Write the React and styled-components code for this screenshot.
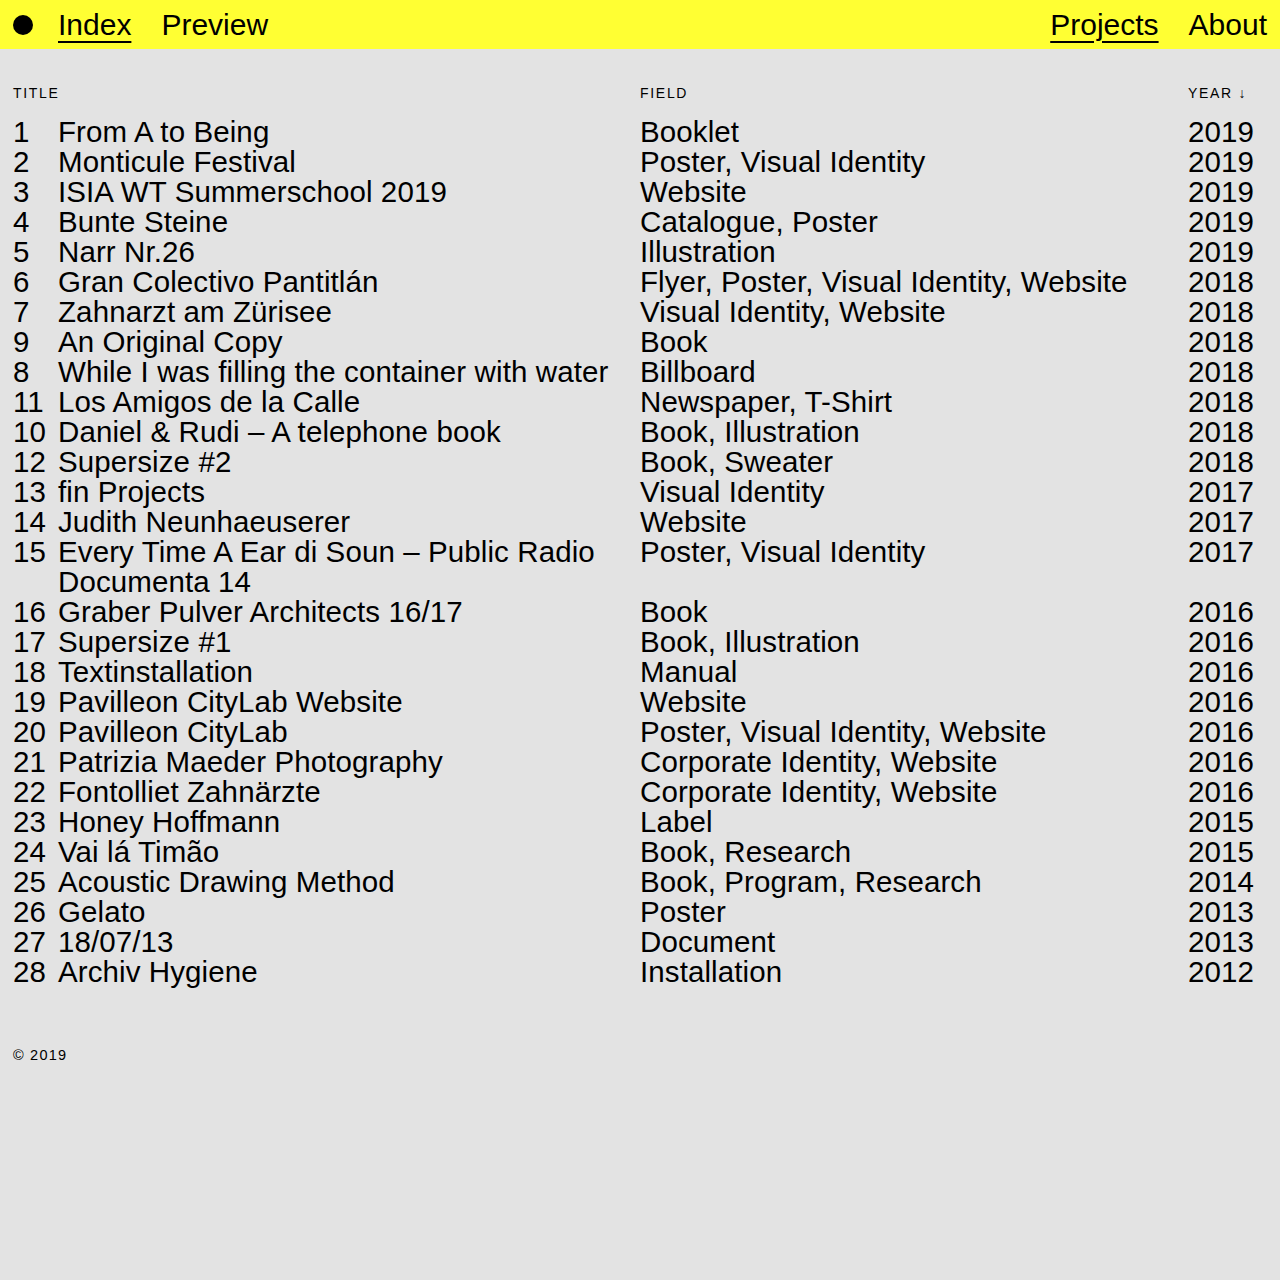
import React from 'react';
import styled, { createGlobalStyle } from 'styled-components';

const GlobalStyle = createGlobalStyle`
  html, body {
    margin: 0;
    padding: 0;
    background: #e3e3e3;
    color: #000;
    font-family: "Liberation Sans", Arial, sans-serif;
  }
`;

const Nav = styled.nav`
  height: 49px;
  background: #ffff33;
  display: flex;
  align-items: center;
  justify-content: space-between;
  padding: 0 13px;
  box-sizing: border-box;
`;

const NavGroup = styled.div`
  display: flex;
  align-items: center;
  gap: 30px;
`;

const Dot = styled.span`
  width: 20px;
  height: 20px;
  border-radius: 50%;
  background: #000;
  margin-right: -5px;
`;

const NavLink = styled.a`
  font-size: 30px;
  line-height: 34px;
  color: #000;
  text-decoration: ${p => (p.$active ? 'underline' : 'none')};
  text-decoration-thickness: 1.5px;
  text-underline-offset: 6px;
`;

const Main = styled.main`
  padding: 32px 13px 0 13px;
`;

const Table = styled.div`
  display: grid;
  grid-template-columns: 45px 582px 548px 1fr;
`;

const Label = styled.div`
  font-size: 14px;
  letter-spacing: 1.7px;
  line-height: 24px;
  text-transform: uppercase;
  padding-bottom: 12px;
  grid-column: ${p => p.$span || 'auto'};
`;

const Cell = styled.div`
  font-size: 29.5px;
  line-height: 30px;
  letter-spacing: 0.1px;
  padding-right: ${p => (p.$pad ? '6px' : '0')};
`;

const Footer = styled.footer`
  padding: 60px 13px 0;
  font-size: 14.5px;
  letter-spacing: 1.2px;
`;

const rows = [
  ['1', 'From A to Being', 'Booklet', '2019'],
  ['2', 'Monticule Festival', 'Poster, Visual Identity', '2019'],
  ['3', 'ISIA WT Summerschool 2019', 'Website', '2019'],
  ['4', 'Bunte Steine', 'Catalogue, Poster', '2019'],
  ['5', 'Narr Nr.26', 'Illustration', '2019'],
  ['6', 'Gran Colectivo Pantitlán', 'Flyer, Poster, Visual Identity, Website', '2018'],
  ['7', 'Zahnarzt am Zürisee', 'Visual Identity, Website', '2018'],
  ['9', 'An Original Copy', 'Book', '2018'],
  ['8', 'While I was filling the container with water', 'Billboard', '2018'],
  ['11', 'Los Amigos de la Calle', 'Newspaper, T-Shirt', '2018'],
  ['10', 'Daniel & Rudi – A telephone book', 'Book, Illustration', '2018'],
  ['12', 'Supersize #2', 'Book, Sweater', '2018'],
  ['13', 'fin Projects', 'Visual Identity', '2017'],
  ['14', 'Judith Neunhaeuserer', 'Website', '2017'],
  ['15', 'Every Time A Ear di Soun – Public Radio Documenta 14', 'Poster, Visual Identity', '2017'],
  ['16', 'Graber Pulver Architects 16/17', 'Book', '2016'],
  ['17', 'Supersize #1', 'Book, Illustration', '2016'],
  ['18', 'Textinstallation', 'Manual', '2016'],
  ['19', 'Pavilleon CityLab Website', 'Website', '2016'],
  ['20', 'Pavilleon CityLab', 'Poster, Visual Identity, Website', '2016'],
  ['21', 'Patrizia Maeder Photography', 'Corporate Identity, Website', '2016'],
  ['22', 'Fontolliet Zahnärzte', 'Corporate Identity, Website', '2016'],
  ['23', 'Honey Hoffmann', 'Label', '2015'],
  ['24', 'Vai lá Timão', 'Book, Research', '2015'],
  ['25', 'Acoustic Drawing Method', 'Book, Program, Research', '2014'],
  ['26', 'Gelato', 'Poster', '2013'],
  ['27', '18/07/13', 'Document', '2013'],
  ['28', 'Archiv Hygiene', 'Installation', '2012'],
];

const App = () => (
  <>
    <GlobalStyle />
    <Nav>
      <NavGroup>
        <Dot />
        <NavLink $active>Index</NavLink>
        <NavLink>Preview</NavLink>
      </NavGroup>
      <NavGroup>
        <NavLink $active>Projects</NavLink>
        <NavLink>About</NavLink>
      </NavGroup>
    </Nav>

    <Main>
      <Table>
        <Label $span="span 2">Title</Label>
        <Label>Field</Label>
        <Label>Year ↓</Label>
        {rows.map(([num, title, field, year]) => (
          <React.Fragment key={num}>
            <Cell>{num}</Cell>
            <Cell $pad>{title}</Cell>
            <Cell>{field}</Cell>
            <Cell>{year}</Cell>
          </React.Fragment>
        ))}
      </Table>
    </Main>

    <Footer>© 2019</Footer>
  </>
);

export default App;
